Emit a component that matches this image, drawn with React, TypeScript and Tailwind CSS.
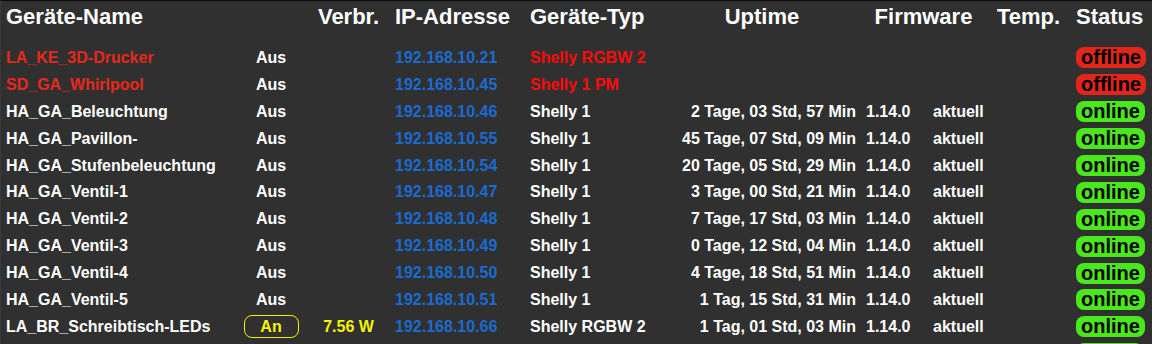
import React from "react";

type Row = {
  name: string;
  red?: boolean;
  on?: boolean;
  power?: string;
  ip: string;
  typ: string;
  uptime?: string;
  fw?: string;
  upd?: string;
  online: boolean;
  hidden?: boolean;
};

const rows: Row[] = [
  { name: "LA_KE_3D-Drucker", red: true, ip: "192.168.10.21", typ: "Shelly RGBW 2", online: false },
  { name: "SD_GA_Whirlpool", red: true, ip: "192.168.10.45", typ: "Shelly 1 PM", online: false },
  { name: "HA_GA_Beleuchtung", ip: "192.168.10.46", typ: "Shelly 1", uptime: "2 Tage, 03 Std, 57 Min", fw: "1.14.0", upd: "aktuell", online: true },
  { name: "HA_GA_Pavillon-", ip: "192.168.10.55", typ: "Shelly 1", uptime: "45 Tage, 07 Std, 09 Min", fw: "1.14.0", upd: "aktuell", online: true },
  { name: "HA_GA_Stufenbeleuchtung", ip: "192.168.10.54", typ: "Shelly 1", uptime: "20 Tage, 05 Std, 29 Min", fw: "1.14.0", upd: "aktuell", online: true },
  { name: "HA_GA_Ventil-1", ip: "192.168.10.47", typ: "Shelly 1", uptime: "3 Tage, 00 Std, 21 Min", fw: "1.14.0", upd: "aktuell", online: true },
  { name: "HA_GA_Ventil-2", ip: "192.168.10.48", typ: "Shelly 1", uptime: "7 Tage, 17 Std, 03 Min", fw: "1.14.0", upd: "aktuell", online: true },
  { name: "HA_GA_Ventil-3", ip: "192.168.10.49", typ: "Shelly 1", uptime: "0 Tage, 12 Std, 04 Min", fw: "1.14.0", upd: "aktuell", online: true },
  { name: "HA_GA_Ventil-4", ip: "192.168.10.50", typ: "Shelly 1", uptime: "4 Tage, 18 Std, 51 Min", fw: "1.14.0", upd: "aktuell", online: true },
  { name: "HA_GA_Ventil-5", ip: "192.168.10.51", typ: "Shelly 1", uptime: "1 Tag, 15 Std, 31 Min", fw: "1.14.0", upd: "aktuell", online: true },
  { name: "LA_BR_Schreibtisch-LEDs", on: true, power: "7.56 W", ip: "192.168.10.66", typ: "Shelly RGBW 2", uptime: "1 Tag, 01 Std, 03 Min", fw: "1.14.0", upd: "aktuell", online: true },
  { name: "", ip: "", typ: "", online: true, hidden: true },
];

export default function App() {
  return (
    <div
      className="w-[1152px] h-[344px] overflow-hidden bg-[#303030] text-white border-t border-t-[#0a0a0a] border-l border-l-[#3a3a3a] font-bold"
      style={{ fontFamily: '"Liberation Sans", Arial, sans-serif' }}
    >
      <div className="flex h-[43.5px] pt-[3px] text-[22px] leading-[25px] whitespace-nowrap">
        <div className="w-[239px] pl-[5px]">Geräte-Name</div>
        <div className="w-[62px]" />
        <div className="w-[93px] text-center">Verbr.</div>
        <div className="w-[135px]">IP-Adresse</div>
        <div className="w-[138px]">Geräte-Typ</div>
        <div className="w-[188px] text-center">Uptime</div>
        <div className="w-[10px]" />
        <div className="w-[115px] text-center">Firmware</div>
        <div className="w-[95px] text-center">Temp.</div>
        <div className="pl-0">Status</div>
      </div>
      {rows.map((r, i) => (
        <div key={i} className="flex items-center h-[26.9px] text-[16px] leading-[18px] whitespace-nowrap">
          <div className={`w-[239px] pl-[5px] ${r.red ? "text-[#e8281c]" : "text-white"}`}>{r.name}</div>
          <div className="w-[62px] flex justify-center">
            {r.hidden ? null : r.on ? (
              <span className="flex items-center justify-center w-[55px] h-[23px] border border-[#f2f200] rounded-[8px] text-[#f5f500]">An</span>
            ) : (
              <span>Aus</span>
            )}
          </div>
          <div className="w-[93px] text-center text-[#f5f500]">{r.power ?? ""}</div>
          <div className="w-[135px] text-[#1a6bd0]">{r.ip}</div>
          <div className={`w-[138px] ${r.red ? "text-[#ff0a0a]" : "text-white"}`}>{r.typ}</div>
          <div className="w-[188px] text-right">{r.uptime ?? ""}</div>
          <div className="w-[10px]" />
          <div className="w-[67px]">{r.fw ?? ""}</div>
          <div className="w-[48px]">{r.upd ?? ""}</div>
          <div className="w-[95px]" />
          <div>
            {r.hidden ? (
              <span className="block w-[67px] h-[21px] rounded-[8px] bg-[#48e81a]" />
            ) : (
              <span
                className={`inline-flex items-center h-[21px] px-[5px] rounded-[8px] text-[20px] leading-[21px] text-black ${
                  r.online ? "bg-[#48e81a]" : "bg-[#e3261a]"
                }`}
              >
                {r.online ? "online" : "offline"}
              </span>
            )}
          </div>
        </div>
      ))}
    </div>
  );
}
